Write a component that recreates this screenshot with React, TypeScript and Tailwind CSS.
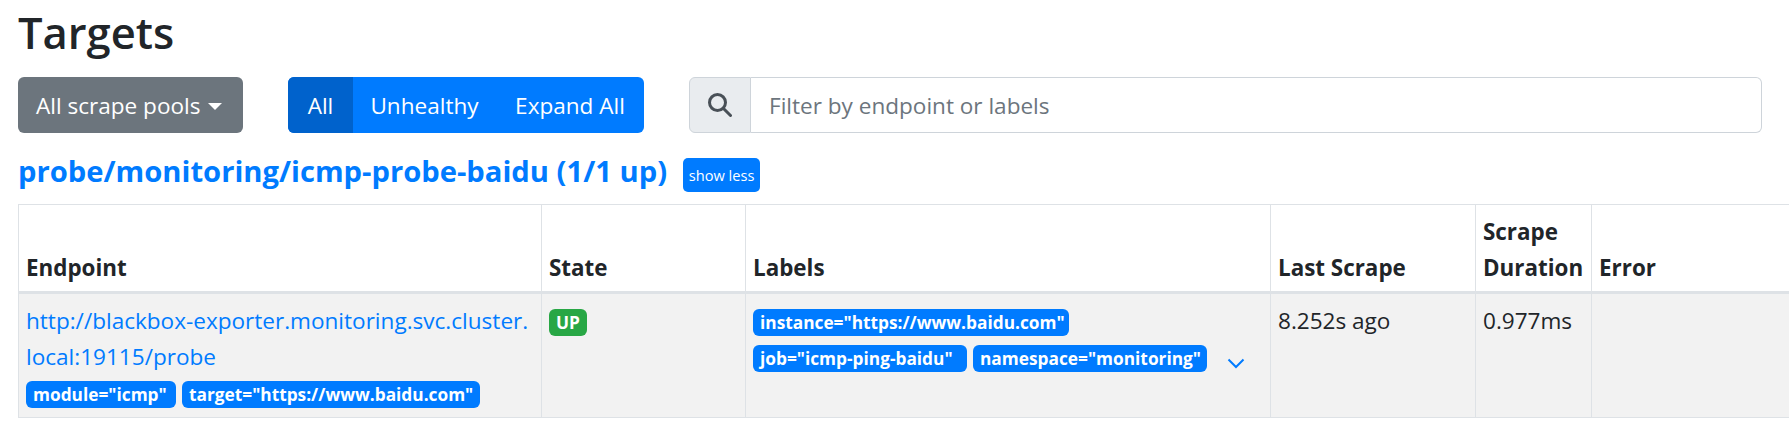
function Badge({ children, color = "bg-[#007bff]", extra = "" }: { children: React.ReactNode; color?: string; extra?: string }) {
  return <span className={`flex h-[27px] items-center rounded-[6px] ${color} ${extra} px-[7px] text-[17.3px] leading-none font-bold whitespace-nowrap text-white`}>{children}</span>;
}
const th = "border border-b-[3px] border-[#dee2e6] px-[7px] pt-[9px] pb-[5px] text-left text-[22.4px] font-bold";
const td = "border border-[#dee2e6] px-[7px] pt-[7px] pb-[8px]";
export default function App() {
  return (
    <div className="h-[440px] w-[1789px] overflow-hidden bg-white pl-[18px] font-['Open_Sans',sans-serif] text-[22.55px] leading-[36px] text-[#212529]">
      <h1 className="pt-[4px] pb-[1px] text-[43.5px] leading-[58px] font-semibold">Targets</h1>
      <div className="mt-[14px] flex items-start">
        <button className="flex h-[56px] w-[225px] items-center rounded-[6px] bg-[#6c757d] pt-[2px] pl-[18px] text-white">All scrape pools<span className="ml-[8px] h-0 w-0 border-x-[7px] border-t-[7px] border-x-transparent border-t-white"></span></button>
        <div className="ml-[45px] flex h-[56px] w-[356px] overflow-hidden rounded-[6px] bg-[#007bff] pt-0 text-white">
          <span className="flex w-[65px] items-center justify-center bg-[#0062cc] pt-[2px]">All</span>
          <span className="flex w-[143px] items-center justify-center pt-[2px]">Unhealthy</span>
          <span className="flex flex-1 items-center justify-center pt-[2px]">Expand All</span>
        </div>
        <div className="ml-[45px] flex h-[56px] w-[1073px]">
          <span className="flex w-[62px] items-center justify-center rounded-l-[6px] border border-[#ced4da] bg-[#e9ecef]">
            <svg width="24" height="24" viewBox="0 0 24 24" fill="none" stroke="#495057" strokeWidth="3"><circle cx="9.5" cy="9.5" r="8" /><path d="M15.5 15.5l7 7" strokeLinecap="round" /></svg>
          </span>
          <span className="flex flex-1 items-center rounded-r-[6px] border border-l-0 border-[#ced4da] px-[18px] pt-[2px] text-[#6c757d]">Filter by endpoint or labels</span>
        </div>
      </div>
      <div className="mt-[14px] flex h-[48px] items-start">
        <a className="text-[29.2px] leading-[48px] font-bold text-[#007bff]">probe/monitoring/icmp-probe-baidu (1/1 up)</a>
        <button className="mt-[11px] ml-[16px] h-[34px] w-[77px] rounded-[5px] bg-[#007bff] text-[14.6px] leading-none text-white">show less</button>
      </div>
      <table className="mt-[9px] w-[1773px] table-fixed border-collapse">
        <thead>
          <tr className="align-bottom">
            <th className={`${th} w-[523px]`}>Endpoint</th>
            <th className={`${th} w-[204px]`}>State</th>
            <th className={`${th} w-[525px]`}>Labels</th>
            <th className={`${th} w-[205px]`}>Last Scrape</th>
            <th className={`${th} w-[116px]`}>Scrape Duration</th>
            <th className={th}>Error</th>
          </tr>
        </thead>
        <tbody>
          <tr className="bg-[#f2f2f2] align-top">
            <td className={td}>
              <div className="translate-y-[2px] text-[#007bff]">http://blackbox-exporter.monitoring.svc.cluster.<br />local:19115/probe</div>
              <div className="flex h-[36px] items-end gap-[6px] pb-[1px]"><Badge extra="w-[150px]">module="icmp"</Badge><Badge extra="w-[298px]">target="https://www.baidu.com"</Badge></div>
            </td>
            <td className={td}><div className="flex h-[36px] items-end pb-[1px]"><Badge color="bg-[#28a745]" extra="w-[38px]">UP</Badge></div></td>
            <td className={td}>
              <div className="flex h-[36px] items-end pb-[1px]"><Badge extra="w-[316px]">instance="https://www.baidu.com"</Badge></div>
              <div className="flex h-[36px] items-end gap-[6px] pb-[1px]"><Badge extra="w-[214px]">job="icmp-ping-baidu"</Badge><Badge extra="w-[234px]">namespace="monitoring"</Badge>
                <svg className="mb-[3px] ml-[14px]" width="18" height="11" viewBox="0 0 18 11" fill="none" stroke="#007bff" strokeWidth="2"><path d="M1.5 1.5l7.5 7.5 7.5-7.5"/></svg>
              </div>
            </td>
            <td className={td}><div className="translate-y-[2px]">8.252s ago</div></td>
            <td className={td}><div className="translate-y-[2px]">0.977ms</div></td>
            <td className={td}></td>
          </tr>
        </tbody>
      </table>
    </div>
  );
}
